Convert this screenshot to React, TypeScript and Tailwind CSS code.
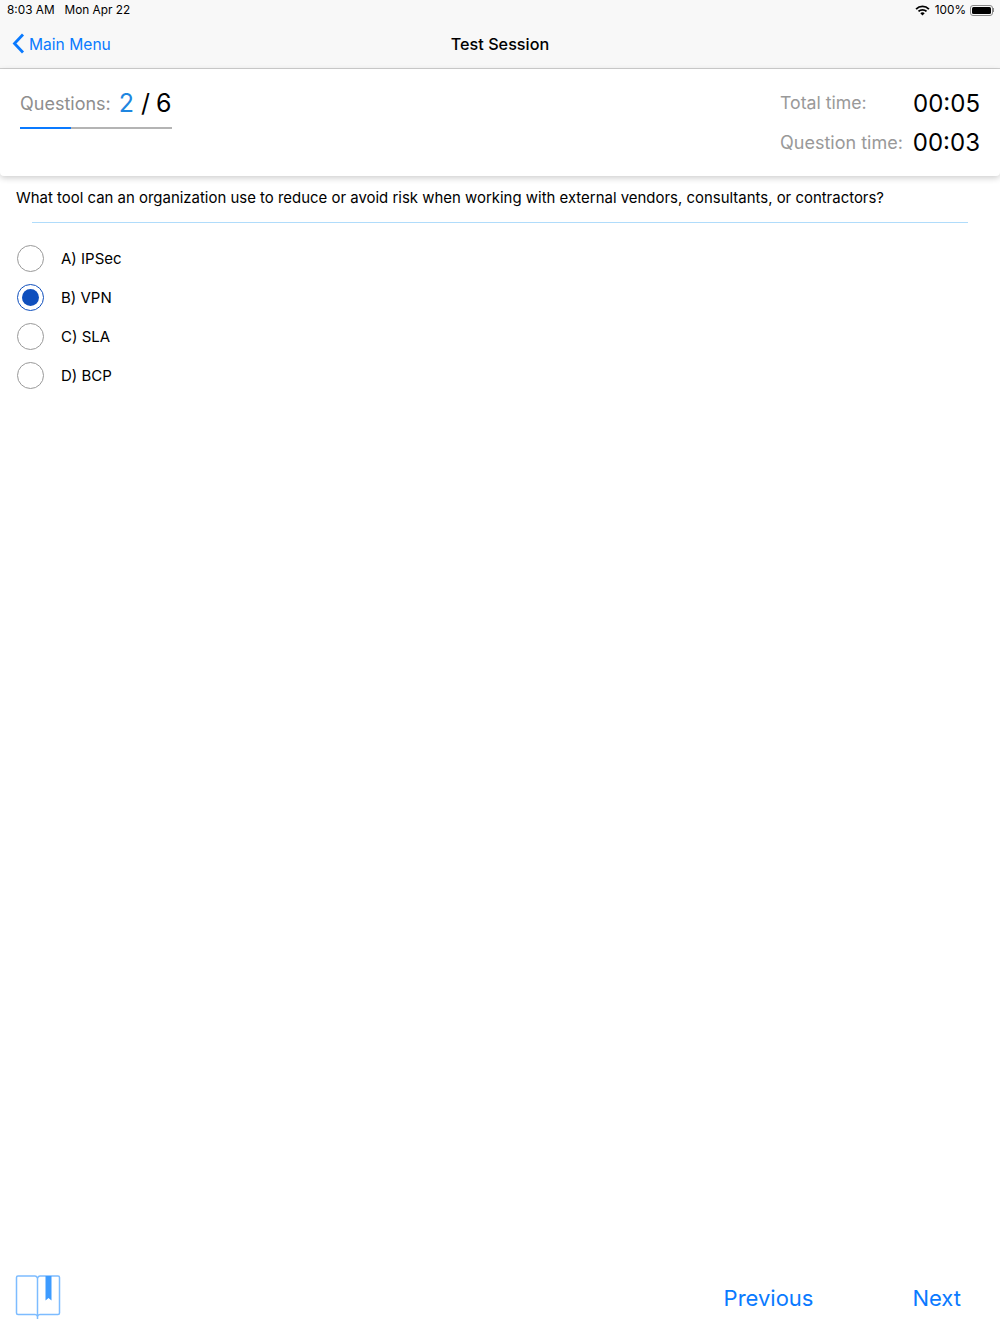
import React from "react"

const options = ["A) IPSec", "B) VPN", "C) SLA", "D) BCP"]

function Wifi() {
  return (
    <svg width="15" height="11" viewBox="0 0 16 12" className="mr-[5px]">
      <path d="M1 4.4 A10 10 0 0 1 15 4.4" fill="none" stroke="#000" strokeWidth="2" />
      <path d="M3.6 7 A6.4 6.4 0 0 1 12.4 7" fill="none" stroke="#000" strokeWidth="2" />
      <path d="M8 11.5 L5.6 9 A3.2 3.2 0 0 1 10.4 9 Z" fill="#000" />
    </svg>
  )
}

function Battery() {
  return (
    <div className="flex items-center ml-[4px]">
      <div className="w-[23px] h-[11px] rounded-[3px] border border-[#8a8a8a] p-px">
        <div className="w-full h-full rounded-[1.5px] bg-black"></div>
      </div>
      <div className="w-px h-[4px] bg-[#8a8a8a]"></div>
    </div>
  )
}

function BookIcon() {
  return (
    <svg width="46" height="46" viewBox="0 0 46 46">
      <path
        d="M1.5 2.5 A1.5 1.5 0 0 1 3 1 H20 Q21.5 1 22.5 3 Q23.5 1 25 1 H43 A1.5 1.5 0 0 1 44.5 2.5 V38 A1.5 1.5 0 0 1 43 39.5 H25 Q23.5 39.5 22.5 41 Q21.5 39.5 20 39.5 H3 A1.5 1.5 0 0 1 1.5 38 Z"
        fill="none"
        stroke="#7dbcff"
        strokeWidth="1.5"
      />
      <path d="M22.5 3 V44" stroke="#7dbcff" strokeWidth="1.5" />
      <path d="M30.5 1 H36.5 V25.5 L33.5 23 L30.5 25.5 Z" fill="#3d9bff" />
    </svg>
  )
}

export default function App() {
  return (
    <div className="w-[1000px] h-[1334px] flex flex-col bg-white text-black font-['Inter','Liberation_Sans',sans-serif]">
      <header className="h-[69px] shrink-0 bg-[#f8f8f8] border-b border-[#d0d0d0] relative">
        <div className="h-[20px] flex items-center justify-between pl-[7px] pr-[6px] text-[11.8px] leading-[20px]">
          <div className="flex gap-[10px]">
            <span>8:03 AM</span>
            <span>Mon Apr 22</span>
          </div>
          <div className="flex items-center">
            <Wifi />
            <span>100%</span>
            <Battery />
          </div>
        </div>
        <div className="h-[48px] flex items-center justify-between pl-[12px] relative">
          <div className="flex items-center gap-[4px] text-[#0a7aff] text-[15.6px]">
            <svg width="13" height="21" viewBox="0 0 13 21">
              <path d="M11 1.5 L2.5 10.5 L11 19.5" fill="none" stroke="#0a7aff" strokeWidth="2.8" />
            </svg>
            <span className="pt-[2px]">Main Menu</span>
          </div>
          <span className="absolute left-0 right-0 text-center text-[16.2px] font-medium">Test Session</span>
        </div>
      </header>

      <section className="h-[107px] shrink-0 flex justify-between pl-[20px] pr-[20px] rounded-b-[4px] shadow-[0_2px_6px_rgba(0,0,0,0.2)] relative">
        <div className="w-[152px] pt-[16px]">
          <div className="flex items-center h-[37px] whitespace-nowrap">
            <span className="text-[18px] text-[#8e8e8e]">Questions:</span>
            <span className="text-[25px] text-[#1f86e0] ml-[8px]">2</span>
            <span className="text-[25px] ml-[7px]">/</span>
            <span className="text-[25px] ml-[6px]">6</span>
          </div>
          <div className="flex h-[2px] mt-[5px] bg-[#b4b4b4]">
            <div className="w-[51px] bg-[#0a7aff]"></div>
          </div>
        </div>
        <div className="w-[200px] pt-[16px] flex flex-col gap-[2px]">
          <div className="h-[37px] flex items-center justify-between">
            <span className="text-[17.7px] text-[#999999]">Total time:</span>
            <span className="text-[24px]">00:05</span>
          </div>
          <div className="h-[37px] flex items-center justify-between">
            <span className="text-[18px] text-[#999999]">Question time:</span>
            <span className="text-[24px]">00:03</span>
          </div>
        </div>
      </section>

      <main className="flex-1 flex flex-col">
        <p className="pl-[16px] pt-[12px] h-[46px] text-[14.95px] leading-[20px] whitespace-nowrap">
          What tool can an organization use to reduce or avoid risk when working with external vendors, consultants, or contractors?
        </p>
        <div className="mx-[32px] h-px bg-[#b0dcfb]"></div>
        <div className="pt-[21px] pl-[17px] flex flex-col gap-[11px]">
          {options.map((o, i) => (
            <div key={o} className="h-[28px] flex items-center gap-[17px] text-[15px]">
              {i === 1 ? (
                <div className="w-[27px] h-[27px] rounded-full border-[1.5px] border-[#0f4fbd] flex items-center justify-center">
                  <div className="w-[17px] h-[17px] rounded-full bg-[#0f4fbd]"></div>
                </div>
              ) : (
                <div className="w-[27px] h-[27px] rounded-full border-[1.5px] border-[#999999]"></div>
              )}
              <span className="pt-[2px]">{o}</span>
            </div>
          ))}
        </div>
      </main>

      <footer className="h-[64px] shrink-0 flex items-center justify-between pl-[15px] pr-[39px] pb-[8px] text-[#0a7aff] text-[22px]">
        <BookIcon />
        <div className="flex gap-[99px]">
          <span>Previous</span>
          <span>Next</span>
        </div>
      </footer>
    </div>
  )
}
